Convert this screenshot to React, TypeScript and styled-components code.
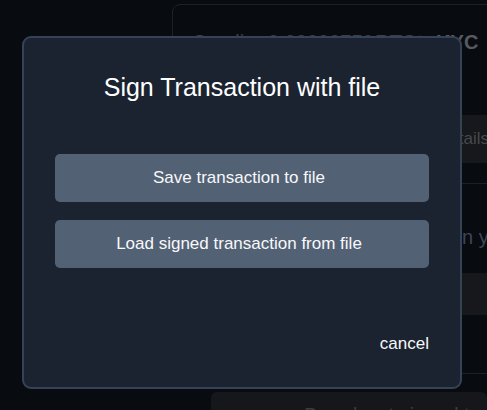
import React from "react";
import styled, { createGlobalStyle } from "styled-components";

const Global = createGlobalStyle`
  html, body {
    margin: 0;
    padding: 0;
    background: #080b10;
    overflow: hidden;
    font-family: "Liberation Sans", Arial, sans-serif;
  }
  #root {
    width: 487px;
    height: 410px;
    position: relative;
    overflow: hidden;
  }
`;

const Page = styled.div`
  display: flex;
  flex-direction: column;
  padding: 4px 0 0 172px;
  width: 600px;
`;

const Card = styled.div`
  border: 1px solid #1d2127;
  border-radius: 8px;
  padding: 25px 0 0 20px;
  height: 370px;
  display: flex;
  flex-direction: column;
  box-sizing: border-box;
`;

const Summary = styled.div`
  font-size: 20px;
  line-height: 24px;
  color: #3b3f45;
  white-space: nowrap;
  word-spacing: -4px;
  b {
    font-weight: 700;
  }
  strong {
    color: #575a5f;
    font-weight: 700;
  }
`;

const GhostButton = styled.div<{ $top: number; $height: number }>`
  margin-top: ${(p) => p.$top}px;
  height: ${(p) => p.$height}px;
  background: #17181b;
  border-radius: 6px;
  color: #46494e;
  font-size: 17px;
  display: flex;
  align-items: center;
  padding-left: 244px;
  white-space: nowrap;
`;

const Separator = styled.div`
  margin: 20px 0 0 -20px;
  height: 1px;
  background: #1c1f25;
`;

const Hint = styled.div`
  margin-top: 41px;
  font-size: 20px;
  line-height: 24px;
  color: #3e4655;
  white-space: nowrap;
  padding-left: 219px;
`;

const BottomButton = styled.div`
  margin: 18px 0 0 211px;
  height: 40px;
  background: #16171a;
  border-radius: 6px;
  color: #3a3c40;
  font-size: 20px;
  padding: 12px 0 0 93px;
  box-sizing: border-box;
  white-space: nowrap;
`;

const Modal = styled.div`
  position: absolute;
  left: 22px;
  top: 36px;
  width: 440px;
  height: 353px;
  box-sizing: border-box;
  background: #1b2331;
  border: 2px solid #364357;
  border-radius: 9px;
  padding: 35px 31px 33px;
  display: flex;
  flex-direction: column;
`;

const Title = styled.h2`
  margin: 0;
  font-size: 25px;
  line-height: 28px;
  font-weight: 400;
  color: #ffffff;
  text-align: center;
`;

const Actions = styled.div`
  margin-top: 53px;
  display: flex;
  flex-direction: column;
  gap: 18px;
`;

const ActionButton = styled.button`
  height: 48px;
  border: none;
  border-radius: 5px;
  background: #536175;
  color: #f7f8fa;
  font-family: "Liberation Sans", Arial, sans-serif;
  font-size: 17px;
  padding: 0 6px 0 0;
  cursor: pointer;
`;

const Footer = styled.div`
  margin-top: auto;
  display: flex;
  justify-content: flex-end;
`;

const Cancel = styled.button`
  background: none;
  border: none;
  padding: 0;
  color: #f7f8fa;
  font-family: "Liberation Sans", Arial, sans-serif;
  font-size: 17px;
  line-height: 20px;
  cursor: pointer;
`;

export default function App() {
  return (
    <>
      <Global />
      <Page>
        <Card>
          <Summary>
            Sending <b>0.00000750 BTC</b> to <strong>KYC</strong>
          </Summary>
          <GhostButton $top={61} $height={48}>
            Details
          </GhostButton>
          <Separator />
          <Hint>Sign in your wallet</Hint>
          <GhostButton $top={24} $height={42}>
            &nbsp;
          </GhostButton>
        </Card>
      </Page>
      <BottomButton>Broadcast signed transaction</BottomButton>
      <Modal>
        <Title>Sign Transaction with file</Title>
        <Actions>
          <ActionButton>Save transaction to file</ActionButton>
          <ActionButton>Load signed transaction from file</ActionButton>
        </Actions>
        <Footer>
          <Cancel>cancel</Cancel>
        </Footer>
      </Modal>
    </>
  );
}
